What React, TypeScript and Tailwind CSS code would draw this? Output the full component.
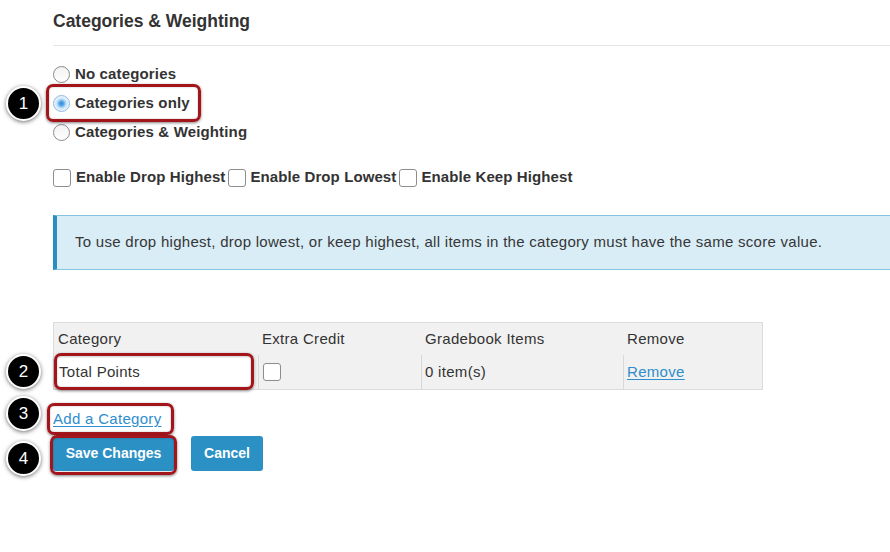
import React from "react";

const font = { fontFamily: '"Liberation Sans", Arial, sans-serif' };

function Callout({ n, top }: { n: number; top: number }) {
  return (
    <div
      className="absolute left-[6px] w-[35px] h-[35px] rounded-full bg-black border-[2px] border-white shadow-[0_1px_4px_rgba(0,0,0,0.55)] flex items-center justify-center text-white text-[17px] leading-none"
      style={{ top }}
    >
      {n}
    </div>
  );
}

function RedBox({ className }: { className: string }) {
  return (
    <div
      className={
        "absolute border-[3px] border-[#a3151b] rounded-[7px] shadow-[0_1px_3px_rgba(0,0,0,0.5),inset_0_0_2px_rgba(0,0,0,0.3)] pointer-events-none " +
        className
      }
    />
  );
}

function Radio({ checked }: { checked?: boolean }) {
  if (checked) {
    return (
      <div className="w-[17px] h-[17px] rounded-full border border-[#8fb8de] bg-[radial-gradient(circle,#2f87d8_0,#5aa9e8_22%,#c9e5fa_45%,#f3f9fe_75%)]" />
    );
  }
  return (
    <div className="w-[17px] h-[17px] rounded-full border border-[#8a8a8a] bg-[linear-gradient(#f2f2f2,#ffffff)]" />
  );
}

function Check() {
  return <div className="w-[18px] h-[18px] rounded-[3px] border border-[#8d8d8d] bg-white shrink-0" />;
}

export default function App() {
  return (
    <div className="relative w-[890px] h-[552px] bg-white overflow-hidden text-[#333]" style={font}>
      <div className="pl-[53px] pt-[10px]">
        <div className="h-[22px] flex items-center text-[17.5px] font-bold text-[#333]">
          Categories &amp; Weighting
        </div>
        <div className="mt-[13px] h-px bg-[#e5e5e5]" />

        <div className="mt-[14px] flex flex-col text-[15px] font-bold tracking-[0.15px]">
          <div className="h-[29px] flex items-center gap-[5px]">
            <Radio />
            <span>No categories</span>
          </div>
          <div className="h-[29px] flex items-center">
            <div className="relative flex items-center gap-[5px]">
              <Radio checked />
              <span>Categories only</span>
              <RedBox className="-left-[7px] -right-[11px] -top-[8px] -bottom-[7px]" />
            </div>
          </div>
          <div className="h-[29px] flex items-center gap-[5px]">
            <Radio />
            <span>Categories &amp; Weighting</span>
          </div>
        </div>

        <div className="mt-[16px] h-[29px] flex items-center text-[15px] font-bold tracking-[0.1px]">
          <Check />
          <span className="ml-[5px] mr-[3px]">Enable Drop Highest</span>
          <Check />
          <span className="ml-[4px] mr-[3px]">Enable Drop Lowest</span>
          <Check />
          <span className="ml-[4px]">Enable Keep Highest</span>
        </div>

        <div className="mt-[23px] h-[55px] flex items-center bg-[#d9edf7] border-y border-[#86c4e3] border-l-[4px] border-l-[#2b8ebf] pl-[18px] text-[15px] tracking-[0.28px] text-[#363636]">
          To use drop highest, drop lowest, or keep highest, all items in the category must have the same score value.
        </div>

        <div className="mt-[52px] w-[710px] border border-[#dcdcdc] bg-[#f1f1f1] text-[15px] tracking-[0.3px] text-[#333]">
          <div className="grid grid-cols-[204px_163px_202px_139px] h-[32px] items-center">
            <div className="pl-[4px]">Category</div>
            <div className="pl-[4px]">Extra Credit</div>
            <div className="pl-[4px]">Gradebook Items</div>
            <div className="pl-[4px]">Remove</div>
          </div>
          <div className="grid grid-cols-[204px_163px_202px_139px] h-[34px]">
            <div className="relative flex items-center pl-[2px] pr-[3px]">
              <div className="w-full h-[29px] bg-white flex items-center pl-[3px]">Total Points</div>
              <RedBox className="left-0 right-[4px] -top-[2px] -bottom-px" />
            </div>
            <div className="border-l border-[#d8d8d8] flex items-center pl-[4px]">
              <Check />
            </div>
            <div className="border-l border-[#d8d8d8] flex items-center pl-[3px]">0 item(s)</div>
            <div className="border-l border-[#d8d8d8] flex items-center pl-[3px]">
              <span className="text-[#2e8dcc] underline underline-offset-2">Remove</span>
            </div>
          </div>
        </div>

        <div className="mt-[19px] h-[20px] flex items-center">
          <div className="relative text-[15px] tracking-[0.3px] text-[#2e8dcc] underline underline-offset-2">
            Add a Category
            <RedBox className="-left-[6px] -right-[13px] -top-[5px] -bottom-[5px]" />
          </div>
        </div>

        <div className="mt-[7px] flex items-center gap-[17px]">
          <div className="relative">
            <div className="h-[35px] w-[121px] rounded-[3px] bg-[#2b90c4] text-white text-[14px] font-bold flex items-center justify-center">
              Save Changes
            </div>
            <RedBox className="-left-[3px] -right-[3px] -top-[1px] -bottom-[4px]" />
          </div>
          <div className="h-[35px] w-[72px] rounded-[3px] bg-[#2b90c4] text-white text-[14px] font-bold flex items-center justify-center">
            Cancel
          </div>
        </div>
      </div>

      <Callout n={1} top={86} />
      <Callout n={2} top={354} />
      <Callout n={3} top={396} />
      <Callout n={4} top={441} />
    </div>
  );
}
